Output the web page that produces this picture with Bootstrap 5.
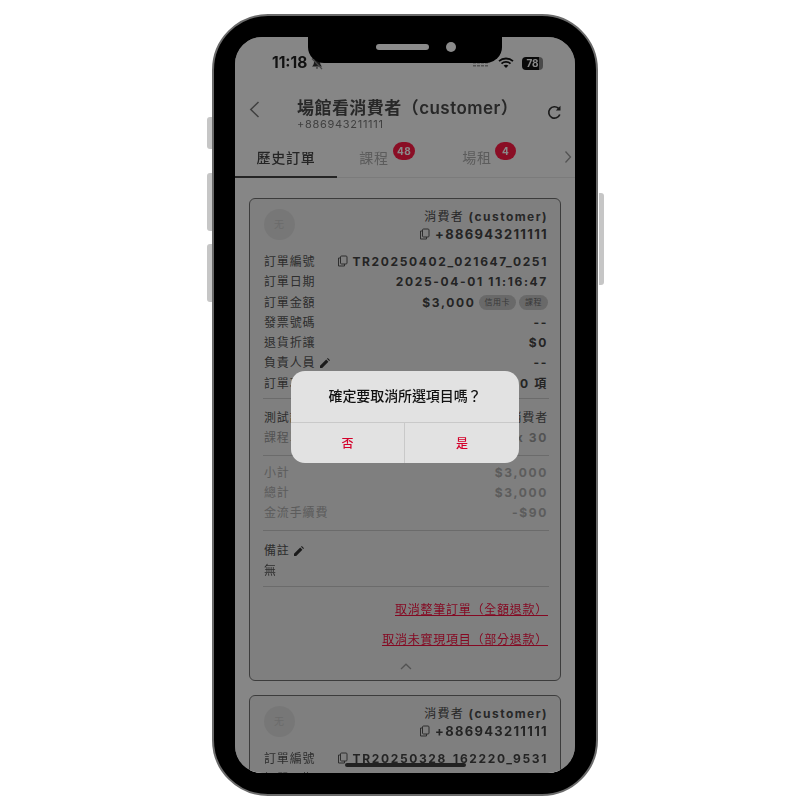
<!DOCTYPE html>
<html lang="zh-Hant">
<head>
<meta charset="utf-8">
<title>場館看消費者</title>
<link href="https://cdn.jsdelivr.net/npm/bootstrap@5.3.0/dist/css/bootstrap.min.css" rel="stylesheet">
<style>
html,body{height:100%;background:#fff}
body{font-family:Inter,"Noto Sans CJK TC",sans-serif;color:#444}
.stage{height:810px;padding-top:14px}
.device{position:relative;width:386px;height:782px;background:#000;border:2px solid #6b6b6b;border-radius:56px;padding:21px;box-sizing:border-box}
.sidekey{position:absolute;width:5px;background:#c6c6c6}
.k1{left:-7px;top:101px;height:32px;border-radius:3px 0 0 3px}
.k2{left:-7px;top:157px;height:58px;border-radius:3px 0 0 3px}
.k3{left:-7px;top:228px;height:58px;border-radius:3px 0 0 3px}
.k4{right:-8px;top:177px;height:92px;border-radius:0 3px 3px 0}
.screen{position:relative;width:340px;height:736px;overflow:hidden;border-radius:27px;background:#f7f7f7;filter:blur(.35px)}
.notch{position:absolute;left:73px;top:0;width:194px;height:26px;background:#000;border-radius:0 0 16px 16px;z-index:5;padding:0 0 6px 22px;gap:17px}
.speaker{width:53px;height:6px;background:#8b8b8b;border-radius:3px}
.camera{width:10px;height:10px;background:#8b8b8b;border-radius:50%}
.statusline{height:48px;padding:16px 32px 0 37px;font-size:15.5px;font-weight:700;line-height:20px;color:#222}
.battery{width:21px;height:13px;border-radius:4px;background:linear-gradient(90deg,#111 80%,#8a8a8a 80%);color:#fff;font-size:10px;line-height:13px;font-weight:700;text-align:center}
.headbar{height:53px;padding:12px 13px 0 14px}
.pagetitle{font-size:17px;line-height:21px;font-weight:600;letter-spacing:.45px;white-space:nowrap;color:#4a4a4a;margin-top:1px}
.pagesub{font-size:11px;line-height:12px;color:#777;letter-spacing:.7px;margin-top:-1px}
.titleblock{margin-left:37px;width:236px}
.tabbar{height:40px;border-bottom:1px solid #e4e4e4;flex-wrap:nowrap}
.tabitem{position:relative;font-size:14px;letter-spacing:.7px;color:#aaa;line-height:20px;padding-top:10px;text-align:center;text-decoration:none}
.tab-a{width:102px;color:#444;border-bottom:2px solid #444;height:40px;font-weight:500}
.tab-b{width:102px;padding-right:28px}
.tab-c{width:102px;padding-right:26px}
.tab-d{width:34px;padding-top:8px;text-align:right;padding-right:3px}
.tabpill{position:absolute;top:4px;background:#ff1a45;color:#fff;font-size:10px;font-weight:700;padding:3px 4px;line-height:12px;letter-spacing:.3px}
.pill-b{left:56px;width:22px}
.pill-c{left:56px;width:21px}
.orderlist{padding:20px 14px 0;gap:14px}
.ordercard{background:#ebebeb;border:1px solid #707070;border-radius:6px;padding:9px 12px 0 14px;font-size:12px;letter-spacing:.85px}
.orderhead{height:44px}
.avatar{width:31px;height:31px;border-radius:50%;background:#dcdcdc;color:#c6c6c6;font-size:10px;line-height:31px;text-align:center;margin-top:1px}
.who{line-height:17.5px;text-align:right;color:#4a4a4a;letter-spacing:1.25px}
.whoname{font-weight:700;letter-spacing:1.45px}
.whophone{font-size:13px;letter-spacing:1.3px}
.whophone,.val{font-weight:700;color:#444}
.fieldrow{height:20.3px;line-height:20px;color:#555;white-space:nowrap}
.val{font-size:12px;letter-spacing:1.65px}
.softrow{color:#aaa}
.softrow .val{color:#aaa}
.softrow2{color:#999}
.softrow2 .val{color:#999}
.rule{height:1px;background:#c6c6c6;margin:0 -1px}
.rule1{margin-top:4px;margin-bottom:9px}
.rule2{margin-top:6px;margin-bottom:7px}
.rule3{margin-top:6px;margin-bottom:10px}
.rule4{margin-top:5px;margin-bottom:18px}
.tagpill{background:#c2c2c2;color:#6a6a6a;font-size:8px;font-weight:400;padding:3px 6px;letter-spacing:.5px;line-height:9px;margin-left:3px}
.cancellink{display:block;width:max-content;margin-left:auto;color:#f5103f;font-size:12px;line-height:10px;letter-spacing:.75px;border-bottom:1px solid #f5103f;text-decoration:none;margin-bottom:19px}
.foldup{height:23px;margin-top:-8px}
.ico{display:inline-block;vertical-align:-1px}
.dimmer{position:absolute;inset:0;background:rgba(0,0,0,.46);z-index:3}
.homebar{position:absolute;left:110px;bottom:6px;width:121px;height:4px;background:#222;border-radius:2px;z-index:4}
.alertbox{position:absolute;left:56px;top:334px;width:228px;height:92px;background:#e2e2e2;border-radius:14px;z-index:4;overflow:hidden}
.alerttitle{height:52px;line-height:50px;text-align:center;font-size:14px;font-weight:500;letter-spacing:-.1px;color:#111;border-bottom:1px solid #c9c9c9}
.alertbtn{height:40px;line-height:42px;font-size:12px;color:#d4002a;border:0;border-radius:0;padding:0;font-weight:500;background:transparent}
.alertbtn:first-child{border-right:1px solid #c9c9c9}
</style>
</head>
<body>
<div class="stage d-flex justify-content-center">
 <div class="device">
  <span class="sidekey k1"></span><span class="sidekey k2"></span><span class="sidekey k3"></span><span class="sidekey k4"></span>
  <div class="screen">
   <div class="notch d-flex align-items-center justify-content-center"><span class="speaker"></span><span class="camera"></span></div>
   <div class="statusline d-flex justify-content-between">
    <div class="d-flex gap-1">11:18
     <svg width="12" height="13" viewBox="0 0 12 13" class="mt-1"><path d="M6 1.500C4 1.500 3 3 3 5C3 7.500 2 8.500 1 9.500H11C10 8.500 9 7.500 9 5C9 3 8 1.500 6 1.500ZM4.800 10.500H7.200L6 12Z" fill="#333"/><path d="M1 1.500L11 12" stroke="#888" stroke-width="1.200"/></svg>
    </div>
    <div class="d-flex align-items-start gap-1 pt-1">
     <svg width="17" height="12" viewBox="0 0 17 12"><g fill="#9a9a9a"><rect x="0" y="8" width="3" height="1.500"/><rect x="4" y="8" width="3" height="1.500"/><rect x="8" y="8" width="3" height="1.500"/><rect x="12" y="8" width="3" height="1.500"/><rect x="0" y="5" width="3" height="1.500"/><rect x="4" y="5" width="3" height="1.500"/><rect x="8" y="5" width="3" height="1.500"/><rect x="12" y="5" width="3" height="1.500"/><rect x="0" y="2" width="3" height="1.500"/><rect x="4" y="2" width="3" height="1.500"/><rect x="8" y="2" width="3" height="1.500"/><rect x="12" y="2" width="3" height="1.500"/></g></svg>
     <svg width="16" height="12" viewBox="0 0 16 12" class="ms-1"><path d="M1 4.200C5 .6 11 .6 15 4.200M3.500 6.600C6 4.400 10 4.400 12.500 6.600" fill="none" stroke="#111" stroke-width="1.800"/><path d="M5.600 8.600C7 7.500 9 7.500 10.400 8.600L8 11Z" fill="#111"/></svg>
     <span class="battery ms-1">78</span>
    </div>
   </div>
   <div class="headbar d-flex align-items-start">
    <svg width="11" height="17" viewBox="0 0 11 17" class="mt-1"><path d="M9.500 1L1.800 8.500L9.500 16" fill="none" stroke="#777" stroke-width="1.500"/></svg>
    <div class="titleblock">
     <div class="pagetitle">場館看消費者（customer）</div>
     <div class="pagesub">+886943211111</div>
    </div>
    <svg width="15" height="15" viewBox="0 0 15 15" class="ms-auto mt-2"><path d="M12.800 9.500A5.700 5.700 0 1 1 11.500 3.400" fill="none" stroke="#333" stroke-width="1.700"/><path d="M13.500 .8V5.500H8.800Z" fill="#333"/></svg>
   </div>
   <nav class="nav tabbar">
    <a class="tabitem tab-a" href="#">歷史訂單</a>
    <a class="tabitem tab-b" href="#">課程<span class="badge rounded-pill tabpill pill-b">48</span></a>
    <a class="tabitem tab-c" href="#">場租<span class="badge rounded-pill tabpill pill-c">4</span></a>
    <a class="tabitem tab-d" href="#"><svg width="8" height="14" viewBox="0 0 8 14"><path d="M1.500 1.500L6.500 7L1.500 12.500" fill="none" stroke="#999" stroke-width="1.300"/></svg></a>
   </nav>
   <div class="orderlist d-flex flex-column">
    <section class="card ordercard flex-shrink-0">
     <div class="orderhead d-flex justify-content-between">
      <div class="avatar">无</div>
      <div class="who">消費者 <span class="whoname">(customer)</span><br><svg class="ico" width="11" height="12" viewBox="0 0 11 12"><rect x="3.500" y="1" width="6.500" height="8" rx="1" fill="none" stroke="#555"/><path d="M3.500 3H1.500V11H7.500V9" fill="none" stroke="#555"/></svg> <span class="whophone">+886943211111</span></div>
     </div>
     <div class="fieldrow d-flex justify-content-between"><span>訂單編號</span><span class="val"><svg class="ico" width="11" height="12" viewBox="0 0 11 12"><rect x="3.500" y="1" width="6.500" height="8" rx="1" fill="none" stroke="#555"/><path d="M3.500 3H1.500V11H7.500V9" fill="none" stroke="#555"/></svg> TR20250402_021647_0251</span></div>
     <div class="fieldrow d-flex justify-content-between"><span>訂單日期</span><span class="val">2025-04-01 11:16:47</span></div>
     <div class="fieldrow d-flex justify-content-between"><span>訂單金額</span><span class="val d-flex align-items-center">$3,000<span class="badge rounded-pill tagpill">信用卡</span><span class="badge rounded-pill tagpill">課程</span></span></div>
     <div class="fieldrow d-flex justify-content-between"><span>發票號碼</span><span class="val">--</span></div>
     <div class="fieldrow d-flex justify-content-between"><span>退貨折讓</span><span class="val">$0</span></div>
     <div class="fieldrow d-flex justify-content-between"><span>負責人員 <svg class="ico" width="10" height="10" viewBox="0 0 10 10"><path d="M0 10V7.800L6.200 1.600L8.400 3.800L2.200 10ZM7 .8L7.800 0L10 2.200L9.200 3Z" fill="#333"/></svg></span><span class="val">--</span></div>
     <div class="fieldrow d-flex justify-content-between"><span>訂單項目</span><span class="val">30 項</span></div>
     <div class="rule rule1"></div>
     <div class="fieldrow d-flex justify-content-between"><span>測試課程</span><span>消費者</span></div>
     <div class="fieldrow d-flex justify-content-between softrow2"><span>課程單價</span><span class="val">$100 x 30</span></div>
     <div class="rule rule2"></div>
     <div class="fieldrow d-flex justify-content-between softrow"><span>小計</span><span class="val">$3,000</span></div>
     <div class="fieldrow d-flex justify-content-between softrow"><span>總計</span><span class="val">$3,000</span></div>
     <div class="fieldrow d-flex justify-content-between softrow"><span>金流手續費</span><span class="val">-$90</span></div>
     <div class="rule rule3"></div>
     <div class="fieldrow"><span>備註 <svg class="ico" width="10" height="10" viewBox="0 0 10 10"><path d="M0 10V7.800L6.200 1.600L8.400 3.800L2.200 10ZM7 .8L7.800 0L10 2.200L9.200 3Z" fill="#333"/></svg></span></div>
     <div class="fieldrow">無</div>
     <div class="rule rule4"></div>
     <a class="cancellink" href="#">取消整筆訂單（全額退款）</a>
     <a class="cancellink" href="#">取消未實現項目（部分退款）</a>
     <div class="foldup text-center"><svg width="12" height="7" viewBox="0 0 12 7"><path d="M1 6L6 1.200L11 6" fill="none" stroke="#999" stroke-width="1.300"/></svg></div>
    </section>
    <section class="card ordercard flex-shrink-0">
     <div class="orderhead d-flex justify-content-between">
      <div class="avatar">无</div>
      <div class="who">消費者 <span class="whoname">(customer)</span><br><svg class="ico" width="11" height="12" viewBox="0 0 11 12"><rect x="3.500" y="1" width="6.500" height="8" rx="1" fill="none" stroke="#555"/><path d="M3.500 3H1.500V11H7.500V9" fill="none" stroke="#555"/></svg> <span class="whophone">+886943211111</span></div>
     </div>
     <div class="fieldrow d-flex justify-content-between"><span>訂單編號</span><span class="val"><svg class="ico" width="11" height="12" viewBox="0 0 11 12"><rect x="3.500" y="1" width="6.500" height="8" rx="1" fill="none" stroke="#555"/><path d="M3.500 3H1.500V11H7.500V9" fill="none" stroke="#555"/></svg> TR20250328_162220_9531</span></div>
     <div class="fieldrow d-flex justify-content-between"><span>訂單日期</span><span class="val">2025-03-28 21:22:20</span></div>
    </section>
   </div>
   <div class="dimmer"></div>
   <div class="homebar"></div>
   <div class="alertbox">
    <div class="alerttitle">確定要取消所選項目嗎？</div>
    <div class="d-flex"><button class="btn alertbtn w-50">否</button><button class="btn alertbtn w-50">是</button></div>
   </div>
  </div>
 </div>
</div>
<script src="https://cdn.jsdelivr.net/npm/bootstrap@5.3.0/dist/js/bootstrap.bundle.min.js"></script>
</body>
</html>
